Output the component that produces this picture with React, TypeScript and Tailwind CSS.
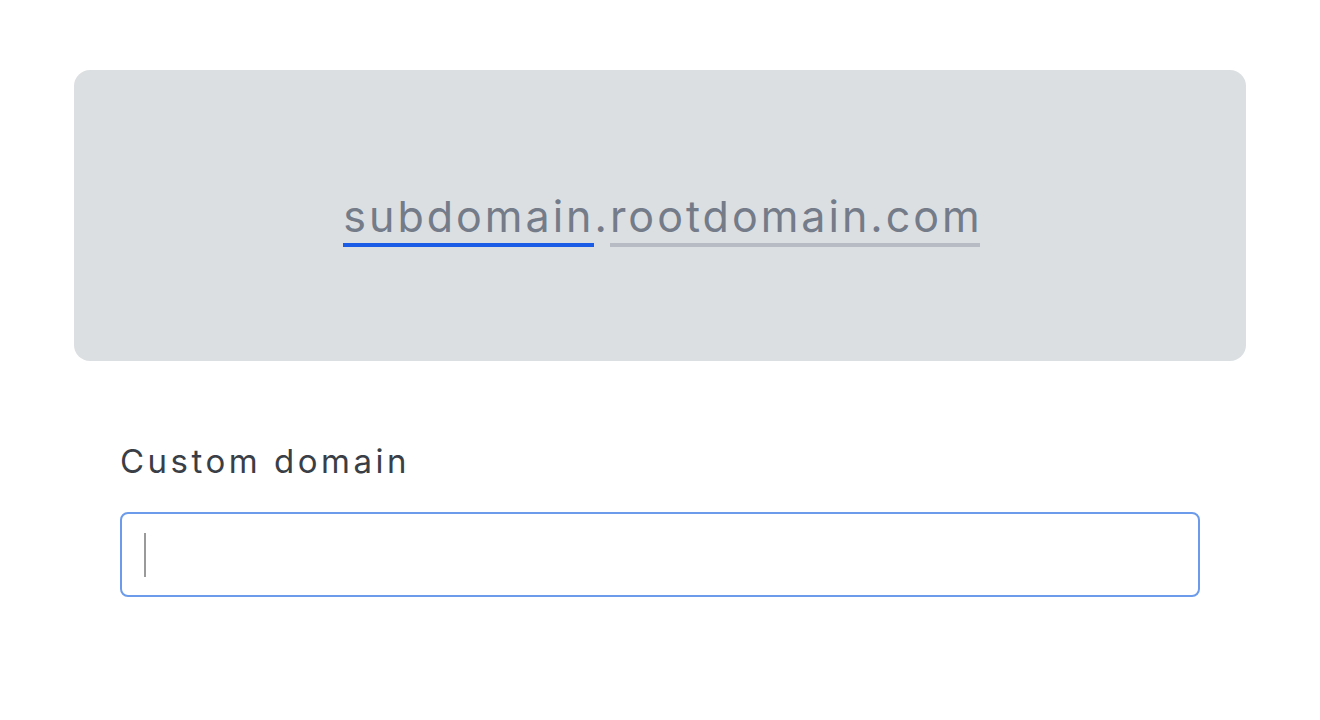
export default function App() {
  return (
    <main
      className="w-[1320px] h-[720px] bg-white"
      style={{ fontFamily: "Inter, 'Noto Sans', sans-serif" }}
    >
      <div className="px-[74px] pt-[70px]">
        <div className="h-[291px] rounded-[16px] bg-[#dcdfe2] flex items-center justify-center">
          <p className="text-[43px] leading-none tracking-[3px] text-[#747b89] flex items-start pt-[10px] -mr-[3px]">
            <span className="border-b-[4px] border-[#1a5ce6] pb-[5px] -mr-[3px]">subdomain</span>
            <span className="pl-[3px]">.</span>
            <span className="border-b-[4px] border-[#b7bbc3] pb-[5px]">rootdomain.co<span className="tracking-normal">m</span></span>
          </p>
        </div>
      </div>

      <div className="px-[120px] pt-[84px]">
        <label className="block text-[33px] leading-none tracking-[3.5px] text-[#3a3f47]">Custom domain</label>
        <div className="mt-[34px] h-[85px] rounded-[8px] border-2 border-[#6b9bea] flex items-center pl-[22px]">
          <div className="w-[2px] h-[44px] bg-[#9a9a9a]" />
        </div>
      </div>
    </main>
  );
}
